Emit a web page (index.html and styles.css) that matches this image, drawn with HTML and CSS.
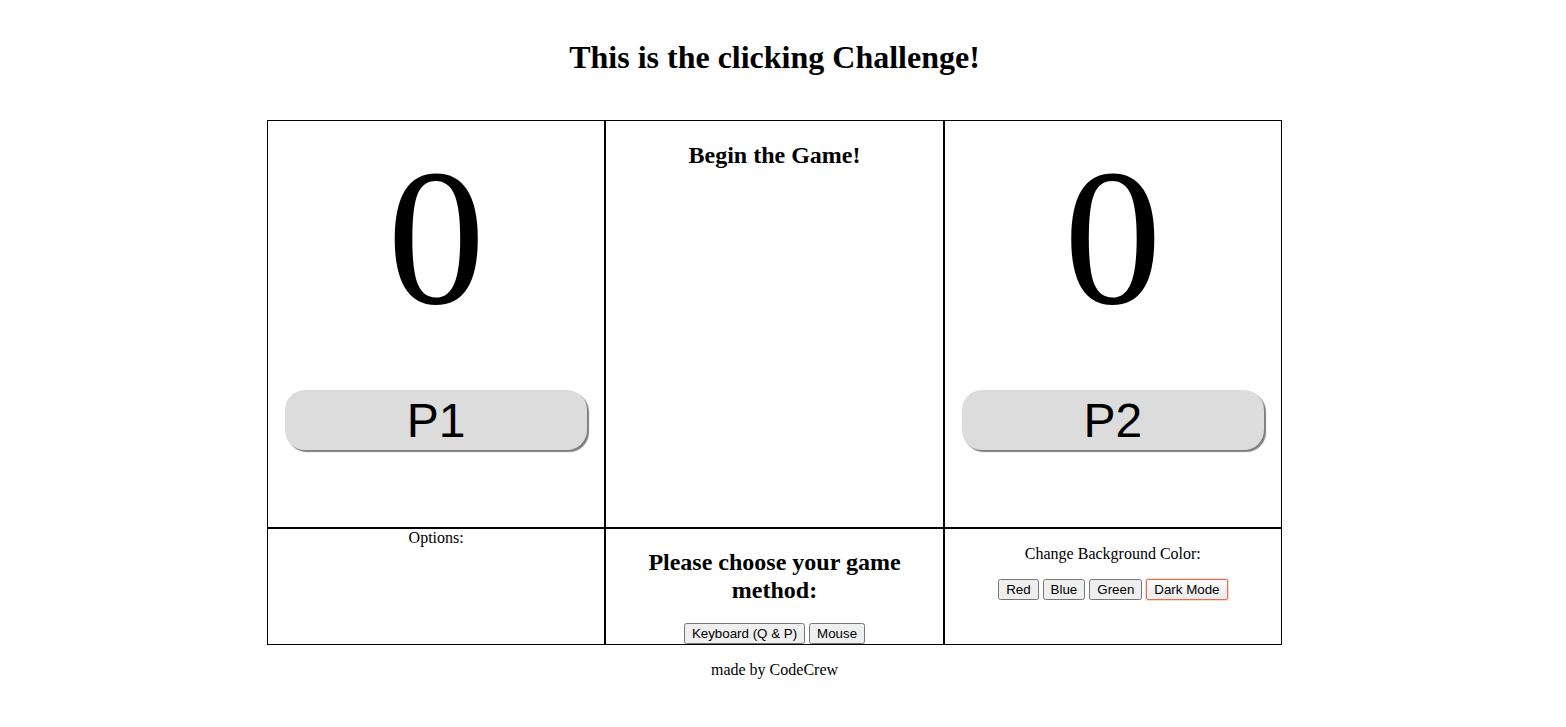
FILE: index.html
```html
<!DOCTYPE html>
<html>
<head>
<meta charset="utf-8">
<title>Clicking Challenge</title>
<link rel="stylesheet" href="styles.css">
</head>
<body>
<div class="page">
  <h1 class="title">This is the clicking Challenge!</h1>
  <table class="board">
    <tr class="top-row">
      <td class="cell player">
        <div class="score">0</div>
        <button class="player-btn">P1</button>
      </td>
      <td class="cell middle">
        <h2 class="status">Begin the Game!</h2>
      </td>
      <td class="cell player">
        <div class="score">0</div>
        <button class="player-btn">P2</button>
      </td>
    </tr>
    <tr class="bottom-row">
      <td class="cell">
        <div class="options">Options:</div>
      </td>
      <td class="cell">
        <h2 class="method">Please choose your game method:</h2>
        <div class="btns">
          <button class="small-btn">Keyboard (Q &amp; P)</button>
          <button class="small-btn">Mouse</button>
        </div>
      </td>
      <td class="cell">
        <p class="bg-label">Change Background Color:</p>
        <div class="btns">
          <button class="small-btn">Red</button>
          <button class="small-btn">Blue</button>
          <button class="small-btn">Green</button>
          <button class="small-btn active">Dark Mode</button>
        </div>
      </td>
    </tr>
  </table>
  <p class="footer">made by CodeCrew</p>
</div>
</body>
</html>
```
FILE: styles.css
```css
html, body {
  margin: 0;
  padding: 0;
  background: #fff;
}
body {
  font-family: "Liberation Serif", "Times New Roman", serif;
  font-size: 16px;
  color: #000;
}
.page {
  width: 1535px;
  margin-left: 7px;
  padding-top: 8px;
  text-align: center;
}
.title {
  font-size: 32px;
  font-weight: bold;
  margin: 31px 0 44px;
  line-height: 37px;
}
.board {
  width: 1015px;
  margin: 0 auto;
  border-spacing: 0;
  table-layout: fixed;
}
.cell {
  border: 1px solid #000;
  padding: 0;
  vertical-align: top;
  text-align: center;
}
.top-row .cell {
  height: 406px;
}
.bottom-row .cell {
  height: 115px;
}
.score {
  font-size: 196px;
  line-height: 228px;
  margin-top: 2px;
}
.player-btn {
  margin-top: 39px;
  width: 302px;
  height: 60px;
  border: none;
  border-radius: 20px;
  background: #dcdcdc;
  box-shadow: 2px 2px 1px #7f7f7f;
  font-family: "Liberation Sans", Arial, sans-serif;
  font-size: 48px;
  color: #000;
  padding: 0;
}
.status {
  font-size: 24px;
  margin: 21px 0;
}
.method {
  font-size: 24px;
  margin: 19px 30px 19px;
  line-height: 28px;
}
.options {
  line-height: 18px;
}
.bg-label {
  margin: 16px 0;
}
.btns {
  display: flex;
  justify-content: center;
  gap: 4px;
}
.small-btn {
  font-family: "Liberation Sans", Arial, sans-serif;
  font-size: 13.33px;
  margin: 0;
}
.small-btn.active {
  appearance: none;
  border: 1px solid #e0704f;
  border-radius: 2px;
  background: linear-gradient(#fbfbfb, #ebebeb) padding-box;
  box-shadow: 0 0 0 1px rgba(240, 170, 140, 0.45);
  padding: 2px 7px;
  color: #000;
}
.footer {
  margin: 16px 0;
}
```
